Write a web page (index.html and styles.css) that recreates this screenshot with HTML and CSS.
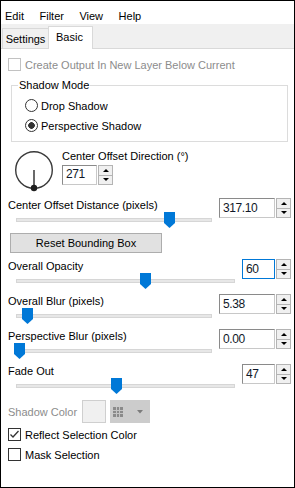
FILE: index.html
```html
<!DOCTYPE html>
<html lang="en">
<head>
    <meta charset="UTF-8">
    <meta name="viewport" content="width=device-width, initial-scale=1.0">
    <title>Drop Shadow</title>
    <link rel="stylesheet" href="styles.css">
</head>
<body>
    <div class="window">
        <div class="menubar">
            <span>Edit</span>
            <span>Filter</span>
            <span>View</span>
            <span>Help</span>
        </div>
        <div class="tabstrip">
            <div class="tab">Settings</div>
            <div class="tab active">Basic</div>
        </div>

        <div class="content">
            <div class="check-row disabled"><span class="checkbox"></span>Create Output In New Layer Below Current</div>

            <fieldset class="group">
                <legend>Shadow Mode</legend>
                <div class="radio-row"><span class="radio"></span>Drop Shadow</div>
                <div class="radio-row"><span class="radio checked"></span>Perspective Shadow</div>
            </fieldset>

            <div class="dial-row">
                <svg class="dial" width="42" height="42" viewBox="0 0 42 42">
                    <circle cx="20" cy="20" r="18.3" fill="none" stroke="#3a3a3a" stroke-width="1.4"/>
                    <line x1="20" y1="20" x2="20" y2="38" stroke="#2a2a2a" stroke-width="1.4"/>
                    <circle cx="20" cy="38" r="3.2" fill="#1e1e1e"/>
                </svg>
                <div class="dial-side">
                    <div class="label">Center Offset Direction (°)</div>
                    <div class="spin dial-spin">
                        <div class="spin-value">271</div>
                        <div class="spin-buttons"><span class="up"></span><span class="down"></span></div>
                    </div>
                </div>
            </div>

            <div class="slider-block first">
                <div class="label">Center Offset Distance (pixels)</div>
                <div class="slider"><div class="track"></div><svg class="thumb" style="left:156px" width="11" height="16" viewBox="0 0 11 16"><polygon points="0,0 11,0 11,11 5.5,16 0,11"/></svg></div>
                <div class="spin">
                    <div class="spin-value">317.10</div>
                    <div class="spin-buttons"><span class="up"></span><span class="down"></span></div>
                </div>
            </div>

            <button class="reset">Reset Bounding Box</button>

            <div class="slider-block narrow opacity">
                <div class="label">Overall Opacity</div>
                <div class="slider"><div class="track"></div><svg class="thumb" style="left:132px" width="11" height="16" viewBox="0 0 11 16"><polygon points="0,0 11,0 11,11 5.5,16 0,11"/></svg></div>
                <div class="spin focused">
                    <div class="spin-value">60</div>
                    <div class="spin-buttons"><span class="up"></span><span class="down"></span></div>
                </div>
            </div>

            <div class="slider-block">
                <div class="label">Overall Blur (pixels)</div>
                <div class="slider"><div class="track"></div><svg class="thumb" style="left:14px" width="11" height="16" viewBox="0 0 11 16"><polygon points="0,0 11,0 11,11 5.5,16 0,11"/></svg></div>
                <div class="spin">
                    <div class="spin-value">5.38</div>
                    <div class="spin-buttons"><span class="up"></span><span class="down"></span></div>
                </div>
            </div>

            <div class="slider-block">
                <div class="label">Perspective Blur (pixels)</div>
                <div class="slider"><div class="track"></div><svg class="thumb" style="left:6px" width="11" height="16" viewBox="0 0 11 16"><polygon points="0,0 11,0 11,11 5.5,16 0,11"/></svg></div>
                <div class="spin">
                    <div class="spin-value">0.00</div>
                    <div class="spin-buttons"><span class="up"></span><span class="down"></span></div>
                </div>
            </div>

            <div class="slider-block narrow">
                <div class="label">Fade Out</div>
                <div class="slider"><div class="track"></div><svg class="thumb" style="left:103px" width="11" height="16" viewBox="0 0 11 16"><polygon points="0,0 11,0 11,11 5.5,16 0,11"/></svg></div>
                <div class="spin">
                    <div class="spin-value">47</div>
                    <div class="spin-buttons"><span class="up"></span><span class="down"></span></div>
                </div>
            </div>

            <div class="color-row">
                <span class="color-label">Shadow Color</span>
                <span class="swatch"></span>
                <span class="palette">
                    <svg width="10" height="10" viewBox="0 0 10 10">
                        <rect x="0" y="0" width="10" height="10" fill="#8a8a8a"/>
                        <path d="M3.5 0V10M6.5 0V10M0 3.5H10M0 6.5H10" stroke="#c4c4c4" stroke-width="1"/>
                    </svg>
                    <svg class="drop" width="6" height="4" viewBox="0 0 6 4"><polygon points="0,0 6,0 3,3.5" fill="#7c7c7c"/></svg>
                </span>
            </div>

            <div class="check-row reflect"><span class="checkbox"><svg width="11" height="11" viewBox="0 0 11 11"><polyline points="1.5,5.5 4,8 9.5,2" fill="none" stroke="#333" stroke-width="1.3"/></svg></span>Reflect Selection Color</div>
            <div class="check-row mask"><span class="checkbox"></span>Mask Selection</div>
        </div>
    </div>
</body>
</html>
```

FILE: styles.css
```css
body {
    margin: 0;
    font-family: "Liberation Sans", Arial, sans-serif;
    font-size: 11px;
    color: #000;
    background: #fff;
}
.window {
    width: 295px;
    height: 488px;
    box-sizing: border-box;
    border: 1px solid #000;
    background: #fff;
}
.menubar {
    display: flex;
    gap: 15.5px;
    height: 23px;
    box-sizing: border-box;
    padding: 8px 0 0 4px;
    line-height: 14px;
}
.tabstrip {
    display: flex;
    align-items: flex-end;
    height: 24px;
    padding-left: 1px;
    background: #f0f0f0;
    border-bottom: 1px solid #d9d9d9;
}
.tab {
    width: 47px;
    height: 20px;
    box-sizing: border-box;
    border: 1px solid #d9d9d9;
    border-bottom: none;
    text-align: center;
    line-height: 20px;
}
.tab.active {
    width: 45px;
    height: 23px;
    margin-bottom: -1px;
    margin-left: -1px;
    background: #fff;
    text-align: left;
    padding-left: 7px;
    line-height: 21px;
}
.content {
    padding: 0 3px 0 7px;
}
.label {
    line-height: 14px;
    white-space: nowrap;
}

/* check boxes and radios */
.check-row, .radio-row {
    display: flex;
    align-items: center;
    height: 15px;
}
.check-row {
    margin-top: 8px;
}
.checkbox {
    width: 13px;
    height: 13px;
    box-sizing: border-box;
    border: 1px solid #333;
    background: #fff;
    margin-right: 4px;
    display: flex;
    align-items: center;
    justify-content: center;
}
.check-row.disabled {
    color: #8c8c8c;
}
.check-row.disabled .checkbox {
    border-color: #c2c2c2;
}
.check-row.reflect {
    margin-top: 4px;
}
.check-row.mask {
    margin-top: 5px;
}
.group {
    margin: 6px 3px 0 3px;
    padding: 0 0 8px 0;
    border: 1px solid #dcdcdc;
    min-width: 0;
}
.group legend {
    margin-left: 6px;
    padding: 0 1px;
    line-height: 14px;
}
.radio-row {
    margin: 6px 0 0 13px;
}
.radio-row + .radio-row {
    margin-top: 5px;
}
.radio {
    width: 13px;
    height: 13px;
    box-sizing: border-box;
    border: 1px solid #333;
    border-radius: 50%;
    margin-right: 3px;
    background: #fff;
}
.radio.checked {
    background: radial-gradient(circle, #333 0 3px, #fff 3.6px);
}

/* direction dial */
.dial-row {
    display: flex;
    margin-top: 7px;
}
.dial {
    margin: 1px 0 0 6px;
}
.dial-side {
    margin-left: 6px;
}
.dial-spin {
    margin-top: 2px;
    width: 51px;
    height: 19px;
}

/* spin boxes */
.spin {
    display: flex;
    height: 20px;
}
.spin-value {
    flex: 1;
    box-sizing: border-box;
    border: 1px solid #8a8a8a;
    border-right-color: #c8c8c8;
    border-bottom-color: #c8c8c8;
    background: #fff;
    padding-left: 3px;
    font-size: 12px;
    letter-spacing: -0.4px;
    line-height: 18px;
    color: #101828;
}
.dial-spin .spin-value {
    line-height: 17px;
}
.spin.focused .spin-value {
    border-color: #0078d7;
}
.spin-buttons {
    width: 15px;
    margin-left: 1px;
    display: flex;
    flex-direction: column;
}
.spin-buttons span {
    flex: 1;
    box-sizing: border-box;
    border: 1px solid #b4b4b4;
    background: #f0f0f0;
    display: flex;
    align-items: center;
    justify-content: center;
}
.spin-buttons span + span {
    border-top: none;
}
.spin-buttons .up::after {
    content: "";
    border-left: 3px solid transparent;
    border-right: 3px solid transparent;
    border-bottom: 3px solid #000;
}
.spin-buttons .down::after {
    content: "";
    border-left: 3px solid transparent;
    border-right: 3px solid transparent;
    border-top: 3px solid #000;
}

/* sliders */
.slider-block {
    display: grid;
    grid-template-columns: 1fr 72px;
    grid-template-rows: 14px 18px;
    column-gap: 3px;
    margin-top: 3px;
}
.slider-block.first {
    margin-top: 6px;
}
.slider-block.opacity {
    margin-top: 6px;
}
.slider-block.narrow {
    grid-template-columns: 1fr 49px;
}
.slider-block .label {
    grid-column: 1;
    grid-row: 1;
}
.slider-block .spin {
    grid-column: 2;
    grid-row: 1 / span 2;
    align-self: start;
}
.slider {
    grid-column: 1;
    grid-row: 2;
    position: relative;
    padding: 0 4px 0 8px;
}
.track {
    margin-top: 6px;
    height: 2px;
    background: #e7e7e7;
    border: 1px solid #d6d6d6;
}
.thumb {
    position: absolute;
    top: 0;
    fill: #0078d7;
}

.reset {
    display: block;
    width: 152px;
    height: 20px;
    margin: 3px 0 0 2px;
    padding: 0;
    border: 1px solid #adadad;
    background: #e1e1e1;
    font-family: inherit;
    font-size: 11px;
    color: #000;
}

/* shadow colour */
.color-row {
    display: flex;
    align-items: center;
    height: 23px;
    margin-top: 4px;
}
.color-label {
    width: 74px;
    color: #8c8c8c;
}
.swatch {
    width: 24px;
    height: 23px;
    box-sizing: border-box;
    border: 1px solid #cfcfcf;
    background: #f0f0f0;
}
.palette {
    width: 40px;
    height: 23px;
    margin-left: 4px;
    background: #cccccc;
    display: flex;
    align-items: center;
    padding-left: 3px;
    box-sizing: border-box;
}
.palette .drop {
    margin-left: 14px;
}
```
